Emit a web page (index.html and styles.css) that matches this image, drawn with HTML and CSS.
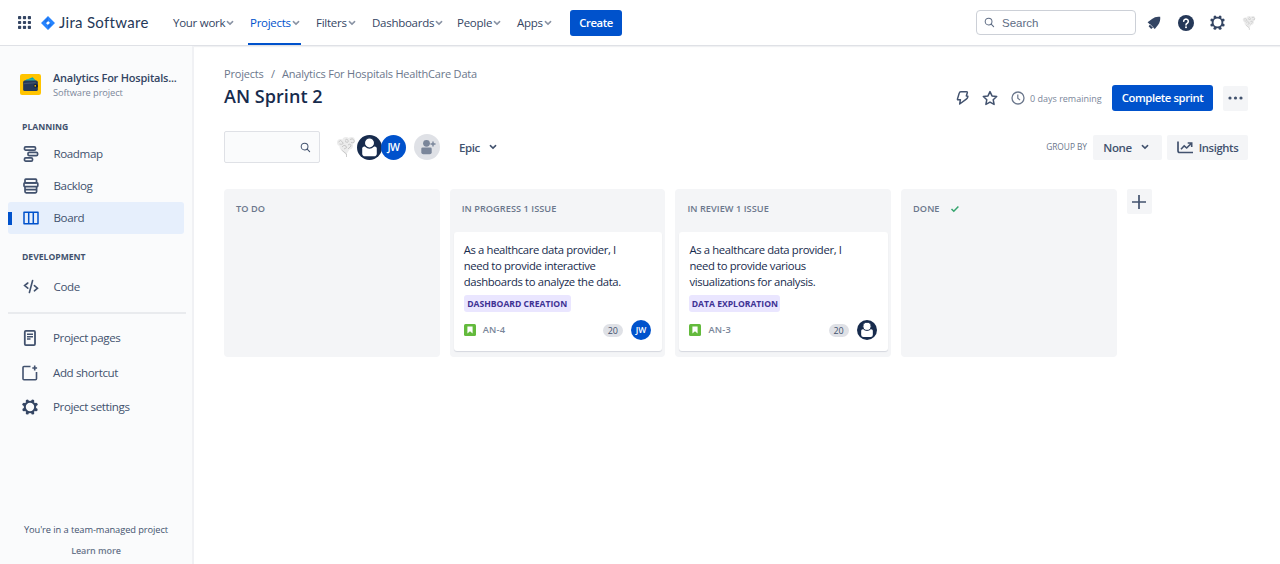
FILE: index.html
```html
<!DOCTYPE html>
<html lang="en">
<head>
<meta charset="utf-8">
<title>AN Sprint 2 - Jira Software</title>
<link rel="stylesheet" href="styles.css">
</head>
<body>
<svg class="defs" width="0" height="0">
  <symbol id="chev" viewBox="0 0 8 6"><path d="M1.4 1.6 4 4.1 6.6 1.6" fill="none" stroke="currentColor" stroke-width="1.5" stroke-linecap="round"/></symbol>
  <symbol id="search" viewBox="0 0 12 12"><circle cx="5" cy="5" r="3.7" fill="none" stroke="currentColor" stroke-width="1.1"/><path d="m7.8 7.8 2.7 2.7" stroke="currentColor" stroke-width="1.2" stroke-linecap="round"/></symbol>
  <symbol id="gear" viewBox="0 0 16 16"><circle cx="8" cy="8" r="5.2" fill="none" stroke="currentColor" stroke-width="2"/><g fill="currentColor"><circle cx="5.3" cy="2" r="1.6"/><circle cx="10.7" cy="2" r="1.6"/><circle cx="14" cy="5.3" r="1.6"/><circle cx="14" cy="10.7" r="1.6"/><circle cx="10.7" cy="14" r="1.6"/><circle cx="5.3" cy="14" r="1.6"/><circle cx="2" cy="10.7" r="1.6"/><circle cx="2" cy="5.3" r="1.6"/></g></symbol>
  <symbol id="person" viewBox="0 0 24 24"><circle cx="12" cy="12" r="12" fill="#172b4d"/><path d="M5 13q0-2 2-2h10q2 0 2 2v4.800q0 2.700-2.700 2.700H7.700Q5 20.500 5 17.800z" fill="#fff"/><circle cx="12" cy="7.600" r="4.900" fill="#fff" stroke="#172b4d" stroke-width="1.200"/></symbol>
  <symbol id="flower" viewBox="0 0 20 22"><g fill="#ececec"><circle cx="4.5" cy="6.5" r="3.5"/><circle cx="10" cy="4.8" r="3.8"/><circle cx="15.5" cy="4.5" r="3.4"/><circle cx="7.5" cy="10.5" r="4"/><circle cx="13" cy="9.5" r="4"/><path d="m5 13 5 6 5-8z"/></g><g fill="none" stroke="#b9b9b9" stroke-width=".7"><path d="M2.500 6q2-3 4 0t-3 2M9 4.500q2-3 3 0t-3 1M14 3.500q3-2 4 1t-3 2M6 11q2-3 4-1t-2 3M12 9q3-2 3 1l-3 3M5.500 14l5 4v3"/></g></symbol>
  <symbol id="story" viewBox="0 0 12 12"><rect width="12" height="12" rx="1.5" fill="#63ba3c"/><path d="M3.400 2.500h5.200v7L6 7.200 3.400 9.500z" fill="#fff"/></symbol>
</svg>
<header class="topbar">
  <svg class="switcher" viewBox="0 0 13 13" fill="#344563"><rect width="3.2" height="3.2" rx=".8"/><rect x="4.9" width="3.2" height="3.2" rx=".8"/><rect x="9.8" width="3.2" height="3.2" rx=".8"/><rect y="4.9" width="3.2" height="3.2" rx=".8"/><rect x="4.9" y="4.9" width="3.2" height="3.2" rx=".8"/><rect x="9.8" y="4.9" width="3.2" height="3.2" rx=".8"/><rect y="9.8" width="3.2" height="3.2" rx=".8"/><rect x="4.9" y="9.8" width="3.2" height="3.2" rx=".8"/><rect x="9.8" y="9.8" width="3.2" height="3.2" rx=".8"/></svg>
  <svg class="jira-mark" viewBox="0 0 14 14"><path d="M7 0 14 7l-7 7-7-7zM7 4.900 4.900 7 7 9.100 9.100 7z" fill="#2684ff" fill-rule="evenodd"/><path d="M7 1.500v3.400L4.900 7 3.300 4.900z" fill="#1f72e6"/><path d="M7 12.500V9.100L9.100 7l1.600 2.100z" fill="#1f72e6"/></svg>
  <span class="brand">Jira Software</span>
  <nav class="nav">
    <a class="w-work">Your work<svg class="chev"><use href="#chev"/></svg></a>
    <a class="w-projects active">Projects<svg class="chev"><use href="#chev"/></svg></a>
    <a class="w-filters">Filters<svg class="chev"><use href="#chev"/></svg></a>
    <a class="w-dash">Dashboards<svg class="chev"><use href="#chev"/></svg></a>
    <a class="w-people">People<svg class="chev"><use href="#chev"/></svg></a>
    <a class="w-apps">Apps<svg class="chev"><use href="#chev"/></svg></a>
  </nav>
  <button class="primary create">Create</button>
  <div class="search"><svg><use href="#search"/></svg>Search</div>
  <div class="tools">
    <svg width="14" height="14" viewBox="0 0 14 14"><path d="M13.200.8q.5 4.800-2.200 8.200L7.800 13 6 11.400 4.200 13 1.600 10.200 3 8.600.6 6.200 5 3Q8.600 0 13.200.8z" fill="#344563"/><path d="m2.600 8 3.600 3.600" stroke="#fff" stroke-width=".7"/></svg>
    <svg width="16" height="16" viewBox="0 0 16 16"><circle cx="8" cy="8" r="8" fill="#253858"/><path d="M5.700 6.300a2.300 2.200 0 1 1 3.500 1.900Q8 8.800 8 9.900" fill="none" stroke="#fff" stroke-width="1.600" stroke-linecap="round"/><circle cx="8" cy="12.300" r="1" fill="#fff"/></svg>
    <svg width="15" height="15" class="ink"><use href="#gear"/></svg>
    <svg width="14" height="16"><use href="#flower"/></svg>
  </div>
</header>
<div class="layout">
  <aside class="sidebar">
    <div class="project">
      <svg viewBox="0 0 20 20"><rect width="20" height="20" rx="2" fill="#ffc400"/><path d="M4 6.500 12 3l3.500 4z" fill="#00a3bf"/><path d="M6 5h8v3H6z" fill="#36b3a0"/><rect x="3" y="6.300" width="14" height="10" rx="1.500" fill="#253858"/><path d="M3.500 8.500 15 7.500v1.200l-11 1z" fill="#42526e"/><rect x="13" y="9.700" width="4" height="3.200" rx="1.200" fill="#0b1d3c"/><circle cx="14.500" cy="11.300" r=".8" fill="#ffc400"/></svg>
      <div><div class="project-name">Analytics For Hospitals...</div><div class="project-type">Software project</div></div>
    </div>
    <h2 class="planning">PLANNING</h2>
    <a class="item"><svg viewBox="0 0 16 16"><g fill="none" stroke="currentColor" stroke-width="1.700"><rect x="1.500" y=".9" width="11" height="3.200" rx="1.200"/><rect x="5" y="6.300" width="9.600" height="3.300" rx="1.200"/><rect x="1.500" y="11.800" width="8" height="3.300" rx="1.200"/></g></svg><span>Roadmap</span></a>
    <a class="item"><svg viewBox="0 0 16 16"><g fill="none" stroke="currentColor" stroke-width="1.700"><rect x="2" y="1.200" width="11.500" height="3.700" rx=".8"/><rect x="1" y="4.900" width="13.800" height="3.700" rx=".8"/><path d="M2 8.600v5q0 1.200 1.200 1.200h9.200q1.200 0 1.200-1.200v-5M2 11.700h11.500"/></g></svg><span>Backlog</span></a>
    <a class="item selected"><svg viewBox="0 0 16 16"><path d="M1 2.200h14v11.600H1zM5.700 2v12M10.300 2v12" fill="none" stroke="currentColor" stroke-width="1.500" stroke-linejoin="round"/></svg><span>Board</span></a>
    <h2 class="development">DEVELOPMENT</h2>
    <a class="item"><svg viewBox="0 0 16 16"><path d="M4.800 4 1.600 6.500l3.200 2.700M11.400 6.600l3.100 2.600-3.100 2.600M9.600 1.500 6.400 13.500" fill="none" stroke="currentColor" stroke-width="1.600" stroke-linecap="round"/></svg><span>Code</span></a>
    <hr>
    <a class="link pages"><svg viewBox="0 0 16 16"><rect x="2.800" y=".9" width="10.200" height="14.200" rx="1" fill="none" stroke="currentColor" stroke-width="1.800"/><path d="M5 4.300h6M5 6.700h6M5 9.100h3.500" stroke="currentColor" stroke-width="1.500"/></svg><span>Project pages</span></a>
    <a class="link shortcut"><svg viewBox="0 0 16 16"><path d="M8.500 1.500H2q-1 0-1 1v11.300q0 1 1 1h11.500q1 0 1-1V7" fill="none" stroke="currentColor" stroke-width="1.600"/><path d="M12.700.6v4.800M10.300 3h4.800" stroke="currentColor" stroke-width="1.600"/></svg><span>Add shortcut</span></a>
    <a class="link settings"><svg class="ink"><use href="#gear"/></svg><span>Project settings</span></a>
    <div class="foot"><p>You're in a team-managed project</p><p class="more">Learn more</p></div>
  </aside>
  <main class="main">
    <div class="crumbs"><span>Projects</span><i>/</i><span class="crumb-project">Analytics For Hospitals HealthCare Data</span></div>
    <div class="title-row">
      <h1>AN Sprint 2</h1>
      <svg class="bolt" viewBox="0 0 13 16"><path d="M4.800 1.700h5.700q1 0 .8 1L10.300 6h1q.8 0 .5.800-.2 1.300-1.500 2.300L3.700 14l.7-4.300H2q-.7 0-.5-.8l1.800-6q.3-1.200 1.500-1.200z" fill="none" stroke="currentColor" stroke-width="1.500" stroke-linejoin="round"/></svg>
      <svg class="star" viewBox="0 0 16 16"><path d="m8 1.600 2 4.300 4.700.6-3.500 3.200.9 4.700L8 12.100l-4.100 2.300.9-4.700L1.300 6.500 6 5.900z" fill="none" stroke="currentColor" stroke-width="1.500" stroke-linejoin="round"/></svg>
      <svg class="clock" viewBox="0 0 14 14"><circle cx="7" cy="7" r="6" fill="none" stroke="currentColor" stroke-width="1.300"/><path d="M6.800 3.500v3.800l2.300 1.800" fill="none" stroke="currentColor" stroke-width="1.200"/></svg>
      <span class="remaining">0 days remaining</span>
      <button class="primary complete">Complete sprint</button>
      <button class="soft dots"><svg viewBox="0 0 15 4" fill="#42526e"><circle cx="2" cy="2" r="1.600"/><circle cx="7.500" cy="2" r="1.600"/><circle cx="13" cy="2" r="1.600"/></svg></button>
    </div>
    <div class="filters">
      <div class="filter-box"><svg><use href="#search"/></svg></div>
      <div class="avatars">
        <svg class="flower"><use href="#flower"/></svg>
        <svg class="avatar"><use href="#person"/></svg>
        <span class="avatar jw">JW</span>
        <svg class="add-person" viewBox="0 0 26 26"><circle cx="13" cy="13" r="13" fill="#dfe1e6"/><g fill="#7a869a"><circle cx="12.500" cy="9.300" r="3.400"/><path d="M7.300 14.800q0-1.300 1.300-1.300h7.800q1.300 0 1.300 1.300v3.400q0 2-2 2H9.300q-2 0-2-2z"/></g><path d="M19 7.500v5M16.500 10h5" stroke="#7a869a" stroke-width="1.400"/></svg>
      </div>
      <span class="epic">Epic</span><svg class="chev dark"><use href="#chev"/></svg>
      <span class="group">GROUP BY</span>
      <button class="soft none"><span>None</span><svg class="chev dark"><use href="#chev"/></svg></button>
      <button class="soft insights"><svg viewBox="0 0 17 13"><path d="M1 .5v9.300q0 1.700 1.700 1.700H16" fill="none" stroke="currentColor" stroke-width="1.700"/><path d="m4 8.300 3.200-3.500L9.700 7l4.500-4.500M10.700 2h4v4" fill="none" stroke="currentColor" stroke-width="1.600"/></svg><span>Insights</span></button>
    </div>
    <div class="board">
      <section class="column"><h3>TO DO</h3></section>
      <section class="column"><h3>IN PROGRESS 1 ISSUE</h3>
        <article class="card"><p>As a healthcare data provider, I<br>need to provide interactive<br>dashboards to analyze the data.</p><span class="tag">DASHBOARD CREATION</span>
        <div class="meta"><svg class="story"><use href="#story"/></svg><span class="key">AN-4</span><span class="points">20</span><span class="mini jw">JW</span></div></article>
      </section>
      <section class="column"><h3>IN REVIEW 1 ISSUE</h3>
        <article class="card"><p>As a healthcare data provider, I<br>need to provide various<br>visualizations for analysis.</p><span class="tag exploration">DATA EXPLORATION</span>
        <div class="meta"><svg class="story"><use href="#story"/></svg><span class="key">AN-3</span><span class="points">20</span><svg class="mini"><use href="#person"/></svg></div></article>
      </section>
      <section class="column"><h3>DONE<svg class="check" viewBox="0 0 10 8"><path d="m1.500 4 2.300 2.300L8.400 1.500" fill="none" stroke="#36a56f" stroke-width="1.500"/></svg></h3></section>
      <button class="soft plus"><svg viewBox="0 0 14 14"><path d="M7 0v14M0 7h14" stroke="currentColor" stroke-width="1.700"/></svg></button>
    </div>
  </main>
</div>
</body>
</html>
```
FILE: styles.css
```css
* { box-sizing: border-box; }
body { margin: 0; width: 1280px; height: 564px; overflow: hidden; background: #fff; color: #42526e; font: 11.5px/16px "Open Sans", "Noto Sans", sans-serif; white-space: nowrap; }
.defs { position: absolute; }
svg { display: block; flex: none; }
h1, h2, h3, p { margin: 0; }
button { border: 0; padding: 0; font: inherit; font-weight: 600; display: flex; align-items: center; justify-content: center; flex: none; }
.ink { color: #344563; }
.primary { background: #0052cc; color: #fff; border-radius: 3px; height: 26px; font-size: 11.3px; letter-spacing: -.4px; }
.soft { background: #f4f5f7; color: #42526e; border-radius: 2px; height: 25px; }
.chev { width: 8px; height: 6px; color: #8993a4; }
.chev.dark { color: #42526e; }

.topbar { height: 46px; display: flex; align-items: center; padding: 0 20px 0 18px; border-bottom: 1px solid #dfe1e6; box-shadow: 0 1px 1px #f0f1f3; }
.switcher { width: 13px; height: 13px; }
.jira-mark { width: 14px; height: 14px; margin-left: 10px; }
.brand { width: 114px; margin-left: 4px; padding-bottom: 1px; font: 15px/18px Lato, sans-serif; color: #253858; letter-spacing: .3px; }
.nav { display: flex; height: 45px; }
.nav a { display: flex; align-items: center; gap: 1px; height: 45px; padding-top: 1.5px; font-weight: 500; color: #344563; letter-spacing: -.27px; }
.w-work { width: 77px; }
.nav .w-projects { width: 53px; padding-left: 2px; margin: 0 15px 0 -2px; color: #0052cc; box-shadow: inset 0 -2px #0052cc; }
.w-filters { width: 56px; }
.w-dash { width: 85px; }
.w-people { width: 60px; }
.w-apps { width: 53px; }
.create { width: 52px; padding-top: 1px; }
.search { margin-left: 354px; width: 160px; height: 25px; border: 1px solid #ccd0d7; border-radius: 4px; display: flex; align-items: center; padding-left: 7px; gap: 7px; font: 11.5px "Liberation Sans", sans-serif; color: #5e6c84; }
.search svg { width: 11px; height: 11px; }
.tools { display: flex; align-items: center; gap: 17px; margin-left: 11px; }
.tools svg:nth-child(3) { margin-left: -1.5px; }

.layout { display: flex; height: 518px; }
.sidebar { width: 194px; background: #fafbfc; border-right: 2px solid #f0f1f4; padding: 22px 7px 0 8px; display: flex; flex-direction: column; flex: none; }
.project { display: flex; height: 32px; align-items: center; gap: 12px; padding-left: 12px; }
.project > svg { width: 21px; height: 21px; }
.project-name { font-weight: 600; font-size: 11px; color: #344563; line-height: 16px; letter-spacing: -.22px; }
.project-type { font-size: 9.3px; line-height: 13px; color: #7a869a; letter-spacing: -.1px; }
.sidebar h2 { font-size: 8.6px; line-height: 12px; font-weight: 700; color: #42526e; padding-left: 14px; }
.planning { margin: 21px 0 5px; }
.item { height: 32px; width: 176px; display: flex; align-items: center; padding-left: 15px; gap: 14.5px; border-radius: 3px; font-size: 11.6px; letter-spacing: -.4px; flex: none; }
.item svg, .link svg { width: 16px; height: 16px; }
.selected { background: linear-gradient(#0052cc, #0052cc) 0 50% / 4px 13px no-repeat #e6effc; }
.selected svg { color: #0052cc; }
.development { margin: 17px 0 8px; }
.sidebar hr { width: 178px; border: 0; height: 2px; background: #e9ebee; margin: 9px 0 0; flex: none; }
.link { height: 16px; display: flex; align-items: center; gap: 15px; padding-left: 14px; font-size: 11.6px; letter-spacing: -.4px; }
.pages { margin-top: 16px; }
.shortcut { margin-top: 19px; }
.settings { margin-top: 18px; }
.foot { margin-top: auto; text-align: center; width: 176px; font-size: 9.3px; letter-spacing: -.08px; line-height: 21px; height: 45px; }
.foot .more { color: #6b778c; font-weight: 600; font-size: 9px; }

.main { flex: 1; padding: 20px 32px 0 30px; }
.crumbs { display: flex; color: #6b778c; height: 16px; font-size: 11px; letter-spacing: -.2px; }
.crumbs span:first-child { width: 47px; }
.crumbs i { width: 11px; font-style: normal; }
.title-row { display: flex; align-items: center; height: 26px; margin-top: 3px; }
h1 { font-size: 18px; line-height: 24px; font-weight: 600; color: #172b4d; letter-spacing: .05px; padding-bottom: 4px; }
.bolt { width: 13px; height: 16px; margin-left: auto; }
.star { width: 16px; height: 16px; margin-left: 13px; }
.clock { width: 14px; height: 14px; margin-left: 13px; color: #6b778c; }
.remaining { width: 76px; margin-left: 5px; font-size: 9px; color: #7a869a; padding-top: 1px; }
.complete { width: 101px; margin-left: 6px; }
.dots { width: 25px; margin-left: 10px; }
.dots svg { width: 15px; height: 4px; }
.filters { display: flex; height: 32px; align-items: center; margin-top: 20px; }
.filter-box { width: 96px; height: 32px; border: 1px solid #dfe1e6; border-radius: 2px; background: #fafbfc; display: flex; align-items: center; justify-content: flex-end; padding-right: 8px; color: #42526e; }
.filter-box svg { width: 11px; height: 11px; }
.avatars { display: flex; align-items: center; margin-left: 16px; }
.flower { width: 20px; height: 22px; }
.avatar { width: 25px; height: 25px; margin-left: 1px; }
.jw { background: #0052cc; color: #fff; border-radius: 50%; display: flex; align-items: center; justify-content: center; font-weight: 600; }
.avatar.jw { margin-left: -1px; font-size: 10.5px; letter-spacing: -.5px; }
.add-person { width: 26px; height: 26px; margin-left: 8px; }
.epic { width: 22px; margin: 0 8px 0 19px; padding-top: 1px; font-weight: 600; font-size: 11.5px; letter-spacing: -.4px; }
.group { margin-left: auto; margin-right: 6px; font-size: 8.4px; letter-spacing: -.05px; color: #6b778c; }
.none { width: 69px; gap: 9px; padding-right: 3px; letter-spacing: -.4px; }
.none span, .insights span { padding-top: 1px; }
.insights { width: 81px; margin-left: 5px; gap: 5px; font-size: 11.3px; letter-spacing: -.4px; }
.insights svg { width: 17px; height: 13px; }
.board { display: flex; gap: 10px; margin-top: 26px; }
.column { width: 215.7px; height: 168px; background: #f4f5f7; border-radius: 4px; padding: 12px 3.5px 0 4px; }
.column h3 { display: flex; align-items: center; height: 16px; padding-left: 8px; font-size: 9.2px; font-weight: 600; letter-spacing: .05px; color: #6b778c; }
.check { width: 10px; height: 8px; margin-left: 10px; }
.card { height: 119px; margin-top: 15px; background: #fff; border-radius: 3px; box-shadow: 0 1px 1px #d5d8de; padding: 10px 11px 0 10px; }
.card p { font-size: 11.3px; color: #172b4d; letter-spacing: -.36px; }
.tag { display: flex; align-items: center; justify-content: center; width: 107px; height: 17px; margin-top: 5px; background: #eae6ff; color: #403294; border-radius: 3px; font-size: 8.6px; font-weight: 700; }
.exploration { width: 91px; }
.meta { display: flex; align-items: center; height: 20px; margin-top: 8px; }
.story { width: 12px; height: 12px; }
.key { margin-left: 7px; font-size: 9.3px; font-weight: 600; letter-spacing: .2px; color: #7a869a; }
.points { width: 20px; height: 13px; margin-left: auto; border-radius: 7px; background: #dfe1e6; font-size: 9px; line-height: 13px; text-align: center; }
.mini { width: 20px; height: 20px; margin-left: 8px; font-size: 8.500px; letter-spacing: -.2px; }
.plus { width: 25px; }
.plus svg { width: 14px; height: 14px; }
```
